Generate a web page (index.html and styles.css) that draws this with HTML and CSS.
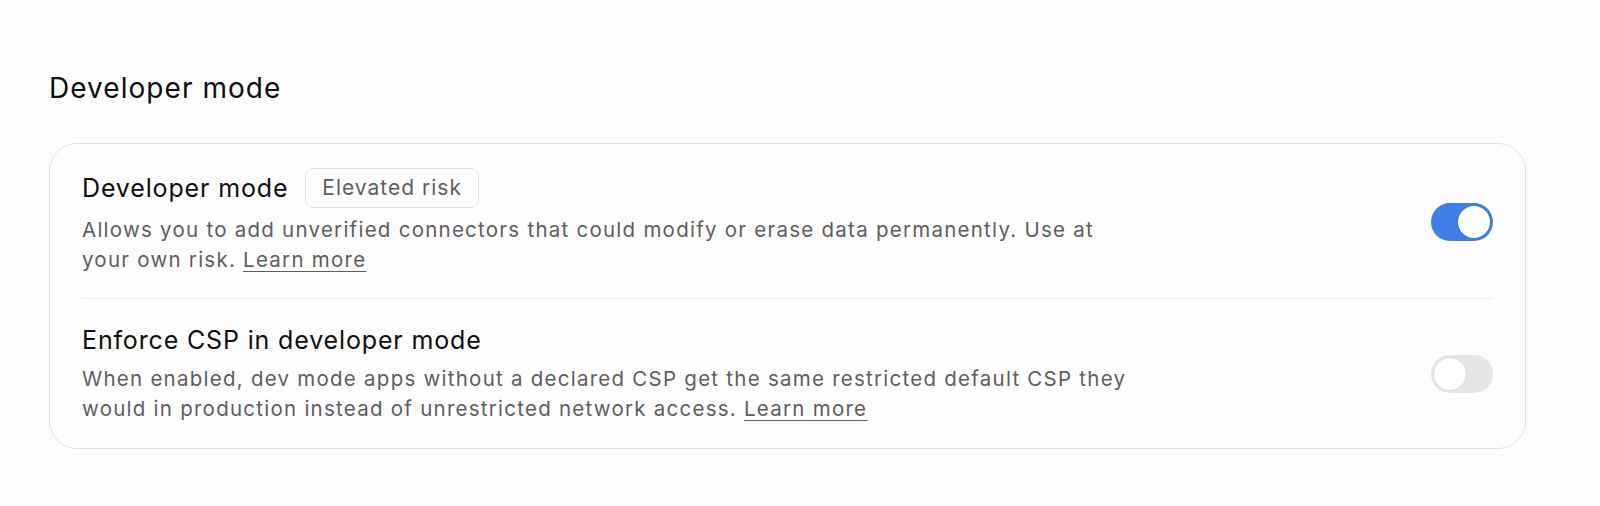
FILE: index.html
```html
<!DOCTYPE html>
<html lang="en">
<head>
    <meta charset="UTF-8">
    <meta name="viewport" content="width=device-width, initial-scale=1.0">
    <title>Developer mode</title>
    <link rel="stylesheet" href="styles.css">
</head>
<body>
    <section class="settings-section">
        <h2 class="section-title">Developer mode</h2>

        <div class="settings-card">
            <!-- Developer mode row -->
            <div class="setting-row">
                <div class="setting-text">
                    <div class="setting-head">
                        <span class="setting-title">Developer mode</span>
                        <span class="badge">Elevated risk</span>
                    </div>
                    <p class="setting-desc">Allows you to add unverified connectors that could modify or erase data permanently. Use at your own risk. <a href="#" class="learn-more">Learn more</a></p>
                </div>
                <button type="button" class="toggle on" aria-pressed="true"><span class="knob"></span></button>
            </div>

            <!-- CSP row -->
            <div class="setting-row">
                <div class="setting-text">
                    <div class="setting-head">
                        <span class="setting-title">Enforce CSP in developer mode</span>
                    </div>
                    <p class="setting-desc">When enabled, dev mode apps without a declared CSP get the same restricted default CSP they would in production instead of unrestricted network access. <a href="#" class="learn-more">Learn more</a></p>
                </div>
                <button type="button" class="toggle" aria-pressed="false"><span class="knob"></span></button>
            </div>
        </div>
    </section>

    <script>
        document.querySelectorAll('.toggle').forEach(function (btn) {
            btn.addEventListener('click', function () {
                const on = btn.classList.toggle('on');
                btn.setAttribute('aria-pressed', on);
            });
        });
    </script>
</body>
</html>
```

FILE: styles.css
```css
body {
    font-family: 'Inter', 'Noto Sans', sans-serif;
    margin: 0;
    padding: 0;
    background-color: #fcfcfc;
    color: #0d0d0d;
}

.settings-section {
    padding: 71px 0 0 49px;
}

.section-title {
    margin: 0 0 38px;
    font-size: 28px;
    font-weight: 400;
    line-height: 34px;
    letter-spacing: 1.05px;
}

.settings-card {
    box-sizing: border-box;
    width: 1477px;
    padding: 0 32px;
    background-color: #fdfdfd;
    border: 1px solid #e0e0e0;
    border-radius: 28px;
}

.setting-row {
    display: flex;
    align-items: center;
    justify-content: space-between;
    padding: 24px 0 23px;
}

.setting-row + .setting-row {
    border-top: 1px solid #ececec;
    padding-top: 25px;
    padding-bottom: 24px;
}

.setting-head {
    display: flex;
    align-items: center;
    gap: 17px;
    min-height: 33px;
}

.setting-title {
    font-size: 25px;
    line-height: 33px;
    letter-spacing: 0.85px;
}

.badge {
    font-size: 21px;
    line-height: 24px;
    padding: 7px 16px;
    color: #5d5d5d;
    letter-spacing: 1px;
    border: 1px solid #e0e0e0;
    border-radius: 8px;
}

.setting-desc {
    margin: 7px 0 0;
    max-width: 1052px;
    font-size: 20.5px;
    line-height: 30px;
    letter-spacing: 1.25px;
    color: #5d5d5d;
}

.learn-more {
    color: #5d5d5d;
    text-decoration: underline;
    text-decoration-thickness: 1px;
    text-underline-offset: 4px;
}

/* switch */
.toggle {
    position: relative;
    flex-shrink: 0;
    width: 62px;
    height: 38px;
    padding: 0;
    border: none;
    border-radius: 19px;
    background-color: #e6e6e6;
    cursor: pointer;
    transition: background-color 0.2s ease-in-out;
}

.toggle .knob {
    position: absolute;
    top: 3px;
    left: 3px;
    width: 32px;
    height: 32px;
    border-radius: 50%;
    background-color: #fff;
    box-shadow: 0 0 0 1px rgba(0, 0, 0, 0.04);
    transition: left 0.2s ease-in-out;
}

.toggle.on {
    background-color: #3f7de8;
}

.toggle.on .knob {
    left: 27px;
}
```
